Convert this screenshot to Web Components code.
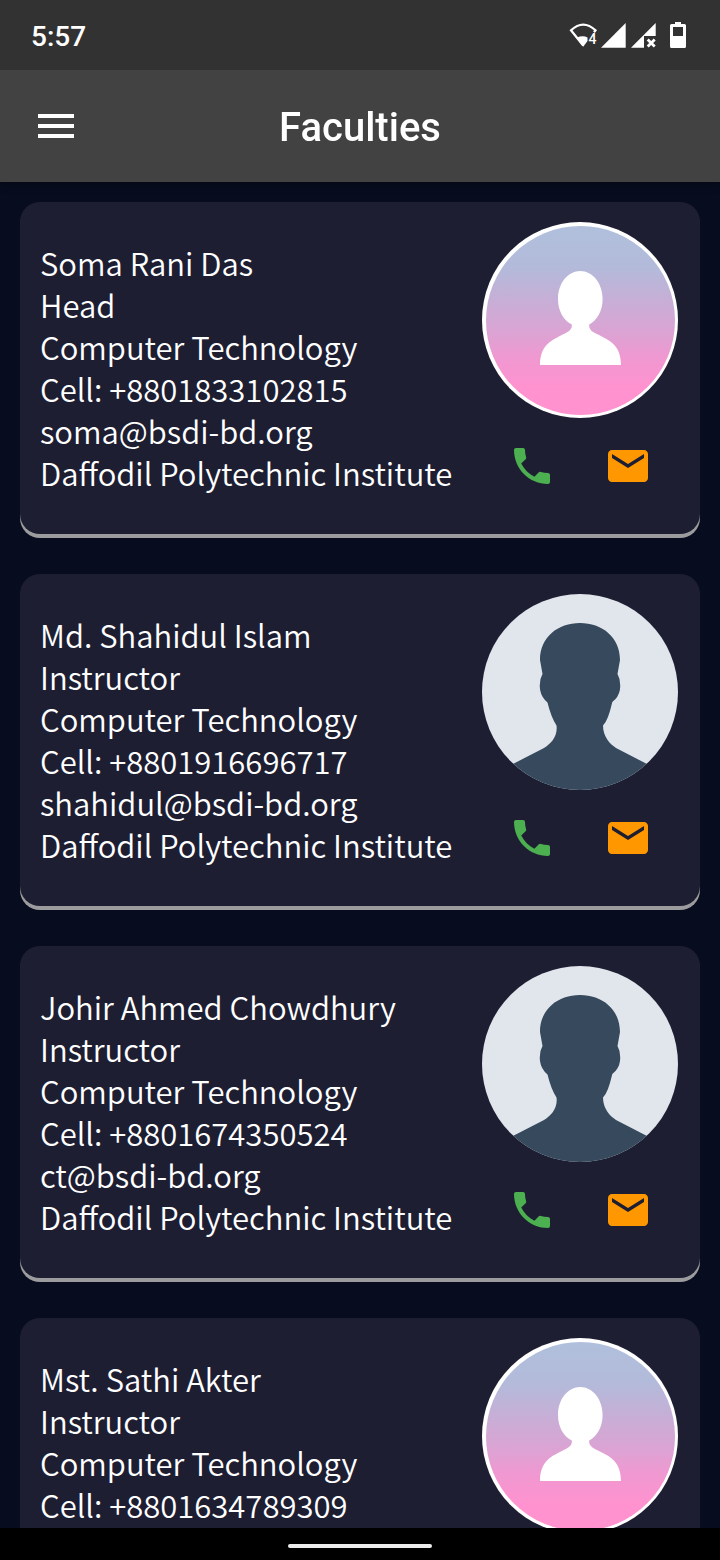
<!DOCTYPE html>
<html lang="en">
<head>
<meta charset="utf-8">
<meta name="viewport" content="width=device-width, initial-scale=1">
<title>Faculties</title>
<style>
  html, body { margin: 0; height: 100%; background: #070d1f; }
  body { font-family: Roboto, sans-serif; color: #fff; }
</style>
</head>
<body>
<faculty-app></faculty-app>
<script>
class BaseElement extends HTMLElement {
  connectedCallback() {
    if (this.shadowRoot) return;
    this.attachShadow({ mode: 'open' }).innerHTML = this.render();
  }
}

customElements.define('status-bar', class extends BaseElement {
  render() {
    return `
    <style>
      :host { display: flex; align-items: center; justify-content: space-between; height: 70px;
        padding: 0 34px 0 31px; background: #323232; flex: none; z-index: 2; }
      time { font: 500 28px/32px Roboto, sans-serif; padding-top: 4px; }
      .icons { display: flex; align-items: center; fill: #fff; }
      svg { display: block; }
      .wifi { margin-right: 4px; }
      .signal { margin-right: 5px; }
      .no-signal { margin-right: 14px; }
      text { font: 500 14px Roboto, sans-serif; }
    </style>
    <time>5:57</time>
    <div class="icons">
      <svg class="wifi" width="28" height="26" viewBox="0 0 28 26">
        <path d="M25 10.200L26.500 8.300Q14.200-3.200 2 8.300L14.200 23.500" fill="none" stroke="#fff" stroke-width="2.200"/>
        <path d="M7.500 15.800Q14 13 18.500 15.500V19L14.200 24.800Z"/>
        <text x="19.500" y="21.500">4</text>
      </svg>
      <svg class="signal" width="25" height="26" viewBox="0 0 25 26"><path d="M0 25.700L24.700 1V25.700Z"/></svg>
      <svg class="no-signal" width="25" height="26" viewBox="0 0 25 26">
        <path d="M0 25.700L24.700 1V14H13V25.700Z"/>
        <path d="M16.700 17.500L23.700 24.500M23.700 17.500L16.700 24.500" stroke="#fff" stroke-width="2.800"/>
      </svg>
      <svg width="16" height="26" viewBox="0 0 16 26">
        <path fill-rule="evenodd" d="M5 0H11V2H14.500Q16 2 16 3.500V24.500Q16 26 14.500 26H1.500Q0 26 0 24.500V3.500Q0 2 1.500 2H5ZM3 5V14H13V5Z"/>
      </svg>
    </div>`;
  }
});

customElements.define('app-bar', class extends BaseElement {
  render() {
    return `
    <style>
      :host { display: grid; grid-template-columns: 48px 1fr 48px; align-items: center; height: 112px;
        padding: 0 32px; background: #424242; flex: none; z-index: 1; box-shadow: 0 2px 8px rgba(0,0,0,.4); }
      button { width: 48px; height: 48px; padding: 0; border: 0; background: none; }
      svg { display: block; fill: #fff; }
      h1 { margin: 0; padding-top: 4px; text-align: center; font: 500 40px/48px Roboto, sans-serif; }
    </style>
    <button type="button" aria-label="Open menu">
      <svg width="48" height="48" viewBox="0 0 24 24"><path d="M3 18h18v-2H3zm0-5h18v-2H3zm0-7v2h18V6z"/></svg>
    </button>
    <h1><slot></slot></h1>`;
  }
});

customElements.define('user-avatar', class extends BaseElement {
  render() {
    const pink = `
      <defs><linearGradient id="sky" x2="0" y2="1">
        <stop offset=".02" stop-color="#b0bfdc"/><stop offset=".22" stop-color="#b3bada"/>
        <stop offset=".55" stop-color="#d9a4d3"/><stop offset=".7" stop-color="#f098d1"/>
        <stop offset=".86" stop-color="#ff92cf"/>
      </linearGradient></defs>
      <circle cx="98" cy="98" r="98" fill="#fff"/>
      <circle cx="98.500" cy="98.500" r="94.500" fill="url(#sky)"/>
      <path fill="#fff" d="M98.300 49C110.600 49 120.600 61 120.600 77C120.600 89 115 98.500 107.200 102.500Q106.500 107.500 112 110.500C124 117 139 120.500 139 143H58C58 120.500 73 117 84.600 110.500Q90.500 107.500 89.800 102.500C81.500 98.500 76 89 76 77C76 61 86 49 98.300 49Z"/>`;
    const slate = `
      <defs><clipPath id="round"><circle cx="98" cy="98" r="98"/></clipPath></defs>
      <g clip-path="url(#round)">
        <path fill="#e1e5ec" d="M0 0H196V196H0Z"/>
        <path fill="#36495d" d="M98 29C120 29 138 43 138 66L135.500 80Q139 86 138 95Q137 103 130.300 108Q126 127 121 131.500C121 143 128 150 134 154L196 186V196H0V186L62 154C69 150 76 142 74.500 131.500Q69 123 65.500 108.500Q59 103 58 95Q57 86 60.500 80L58 66C58 43 76 29 98 29Z"/>
      </g>`;
    return `
    <style>:host, svg { display: block; }</style>
    <svg width="196" height="196" viewBox="0 0 196 196" role="img" aria-label="Profile picture">
      ${this.getAttribute('variant') === 'pink' ? pink : slate}
    </svg>`;
  }
});

customElements.define('faculty-card', class extends BaseElement {
  render() {
    const a = n => this.getAttribute(n);
    return `
    <style>
      :host { display: flex; justify-content: space-between; align-items: flex-start; padding: 20px;
        border-radius: 20px; background: #1e1e32; box-shadow: 0 4px 0 #9c9c9e; flex: none; }
      .info { padding-top: 20px; min-width: 0; font: 350 31px/42px "Noto Sans CJK SC", sans-serif; }
      h2, p { margin: 0; font: inherit; }
      .side { display: flex; flex-direction: column; align-items: center; width: 200px; flex: none; }
      .actions { display: flex; }
      a { display: block; padding: 24px; }
      svg { display: block; }
    </style>
    <div class="info">
      <h2><slot></slot></h2>
      <p>${a('role-title')}</p>
      <p>Computer Technology</p>
      <p>Cell: ${a('cell')}</p>
      <p>${a('email')}</p>
      <p>Daffodil Polytechnic Institute</p>
    </div>
    <div class="side">
      <user-avatar variant="${a('avatar')}"></user-avatar>
      <div class="actions">
        <a href="tel:${a('cell')}" aria-label="Call"><svg width="48" height="48" viewBox="0 0 24 24" fill="#4caf50"><path d="M6.620 10.790c1.440 2.830 3.760 5.140 6.590 6.590l2.200-2.200c.27-.27.67-.36 1.020-.24 1.120.37 2.330.57 3.570.57.55 0 1 .45 1 1V20c0 .55-.45 1-1 1-9.390 0-17-7.610-17-17 0-.55.45-1 1-1h3.500c.55 0 1 .45 1 1 0 1.250.2 2.450.57 3.570.11.35.03.74-.25 1.020l-2.200 2.200z"/></svg></a>
        <a href="mailto:${a('email')}" aria-label="Email"><svg width="48" height="48" viewBox="0 0 24 24" fill="#ff9800"><path fill-rule="evenodd" d="M20 4H4c-1.100 0-2 .9-2 2v12c0 1.100.9 2 2 2h16c1.100 0 2-.9 2-2V6c0-1.100-.9-2-2-2zM20 8l-8 5-8-5V6l8 5 8-5v2z"/></svg></a>
      </div>
    </div>`;
  }
});

customElements.define('nav-handle', class extends BaseElement {
  render() {
    return `
    <style>
      :host { display: flex; justify-content: center; align-items: center; height: 32px; padding-top: 4px;
        box-sizing: border-box; background: #000; flex: none; }
      span { width: 20%; height: 4px; border-radius: 2px; background: #ececec; }
    </style>
    <span></span>`;
  }
});

customElements.define('faculty-app', class extends BaseElement {
  render() {
    return `
    <style>
      :host { display: flex; flex-direction: column; height: 100vh; }
      main { flex: 1; min-height: 0; display: flex; flex-direction: column; gap: 40px; padding: 20px;
        overflow-y: auto; scrollbar-width: none; background: #070d1f; }
    </style>
    <status-bar></status-bar>
    <app-bar>Faculties</app-bar>
    <main>
      <faculty-card role-title="Head" cell="+8801833102815" email="soma@bsdi-bd.org" avatar="pink">Soma Rani Das</faculty-card>
      <faculty-card role-title="Instructor" cell="+8801916696717" email="shahidul@bsdi-bd.org" avatar="slate">Md. Shahidul Islam</faculty-card>
      <faculty-card role-title="Instructor" cell="+8801674350524" email="ct@bsdi-bd.org" avatar="slate">Johir Ahmed Chowdhury</faculty-card>
      <faculty-card role-title="Instructor" cell="+8801634789309" email="sathi@bsdi-bd.org" avatar="pink">Mst. Sathi Akter</faculty-card>
    </main>
    <nav-handle></nav-handle>`;
  }
});
</script>
</body>
</html>
